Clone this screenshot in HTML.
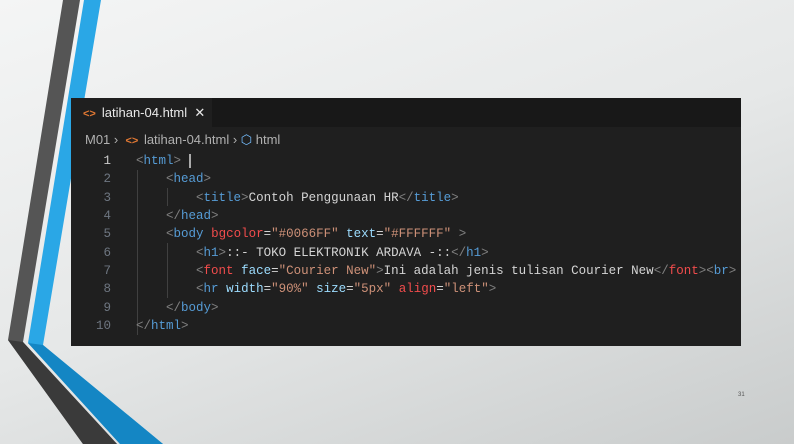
<!DOCTYPE html>
<html><head><style>
*{margin:0;padding:0;box-sizing:border-box}
body{width:794px;height:444px;overflow:hidden;position:relative;background:linear-gradient(160deg,#f4f5f5 0%,#e6e8e8 50%,#c9cccc 100%);font-family:"Liberation Sans",sans-serif}
svg.bg{position:absolute;left:0;top:0}
#ed{position:absolute;left:71px;top:98px;width:670px;height:248px;background:#1f1f1f}
#tabs{position:absolute;left:0;top:0;width:670px;height:29px;background:#181818}
#tab{position:absolute;left:0;top:0;width:141px;height:29px;background:#1f1f1f;color:#e8e8e8;font-size:13px;line-height:29px;padding-left:12px}
.ic{color:#e37933;font-weight:bold;font-size:11px;margin-right:6px}
#crumb{position:absolute;left:14px;top:34px;color:#b0b0b0;font-size:13px;white-space:pre}
.code{position:absolute;left:0;top:54px;font-family:"Liberation Mono",monospace;font-size:12.5px;line-height:18.33px;white-space:pre;color:#d4d4d4}
.ln{position:absolute;width:40px;text-align:right;color:#6e7681}
.cl{position:absolute;left:65px}
.g{color:#808080}.t{color:#569cd6}.a{color:#9cdcfe}.r{color:#f14c4c}.s{color:#ce9178}
.guide{position:absolute;width:1px;background:#404040}
</style></head><body>
<svg class="bg" width="794" height="444">
<polygon points="63,0 80,0 23,342 117,444 83,444 8,340" fill="#555"/>
<polygon points="84,0 101,0 43,345 163,444 120,444 28,343" fill="#2aa7e6"/>
<polygon points="28,343 43,345 163,444 120,444" fill="#1486c4"/>
<polygon points="8,340 23,342 117,444 83,444" fill="#3a3a3a"/>
</svg>
<div id="ed">
<div id="tabs"><div id="tab"><span class="ic">&lt;&gt;</span>latihan-04.html&nbsp; ✕</div></div>
<div id="crumb">M01 ›  <span class="ic" style="margin-right:2px">&lt;&gt;</span> latihan-04.html › <span style="color:#75beff">⬡</span> html</div>
<div class="guide" style="left:66px;top:72px;height:165px"></div>
<div class="guide" style="left:96px;top:90px;height:18px"></div>
<div class="guide" style="left:96px;top:145px;height:55px"></div>
<div class="code">
<div class="ln" style="top:0;color:#ccc">1</div><div class="ln" style="top:18.33px">2</div><div class="ln" style="top:36.66px">3</div><div class="ln" style="top:55px">4</div><div class="ln" style="top:73.3px">5</div><div class="ln" style="top:91.6px">6</div><div class="ln" style="top:110px">7</div><div class="ln" style="top:128.3px">8</div><div class="ln" style="top:146.6px">9</div><div class="ln" style="top:165px">10</div>
<div class="cl" style="top:0"><span class="g">&lt;</span><span class="t">html</span><span class="g">&gt;</span> <span style="border-left:2px solid #aaa"> </span></div>
<div class="cl" style="top:18.33px">    <span class="g">&lt;</span><span class="t">head</span><span class="g">&gt;</span></div>
<div class="cl" style="top:36.66px">        <span class="g">&lt;</span><span class="t">title</span><span class="g">&gt;</span>Contoh Penggunaan HR<span class="g">&lt;/</span><span class="t">title</span><span class="g">&gt;</span></div>
<div class="cl" style="top:55px">    <span class="g">&lt;/</span><span class="t">head</span><span class="g">&gt;</span></div>
<div class="cl" style="top:73.3px">    <span class="g">&lt;</span><span class="t">body</span> <span class="r">bgcolor</span>=<span class="s">"#0066FF"</span> <span class="a">text</span>=<span class="s">"#FFFFFF"</span> <span class="g">&gt;</span></div>
<div class="cl" style="top:91.6px">        <span class="g">&lt;</span><span class="t">h1</span><span class="g">&gt;</span>::- TOKO ELEKTRONIK ARDAVA -::<span class="g">&lt;/</span><span class="t">h1</span><span class="g">&gt;</span></div>
<div class="cl" style="top:110px">        <span class="g">&lt;</span><span class="r">font</span> <span class="a">face</span>=<span class="s">"Courier New"</span><span class="g">&gt;</span>Ini adalah jenis tulisan Courier New<span class="g">&lt;/</span><span class="r">font</span><span class="g">&gt;&lt;</span><span class="t">br</span><span class="g">&gt;</span></div>
<div class="cl" style="top:128.3px">        <span class="g">&lt;</span><span class="t">hr</span> <span class="a">width</span>=<span class="s">"90%"</span> <span class="a">size</span>=<span class="s">"5px"</span> <span class="r">align</span>=<span class="s">"left"</span><span class="g">&gt;</span></div>
<div class="cl" style="top:146.6px">    <span class="g">&lt;/</span><span class="t">body</span><span class="g">&gt;</span></div>
<div class="cl" style="top:165px"><span class="g">&lt;/</span><span class="t">html</span><span class="g">&gt;</span></div>
</div>
</div>
<div style="position:absolute;left:738px;top:392px;font-size:6px;color:#555">31</div>
</body></html>
